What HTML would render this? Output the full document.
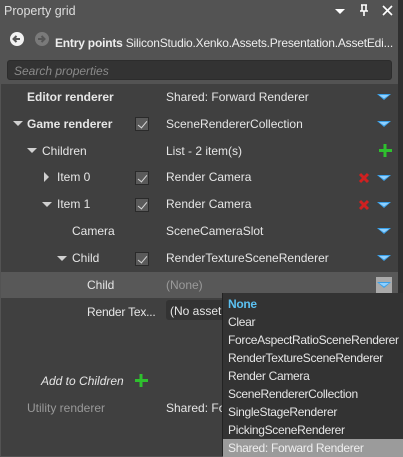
<!DOCTYPE html>
<html><head><meta charset="utf-8"><style>
*{margin:0;padding:0;box-sizing:border-box}
body{width:403px;height:456px;overflow:hidden;background:#535353;font-family:"Liberation Sans",sans-serif;font-size:12px;color:#e6e6e6;position:relative}
.a{position:absolute;white-space:nowrap}
.b{font-weight:bold}
.cb{position:absolute;width:14px;height:14px;border:1px solid #2a2a2a;background:#5a5a5a}
.cb:after{content:"";position:absolute;left:4px;top:1px;width:4px;height:8px;border:solid #d8d8d8;border-width:0 1.5px 1.5px 0;transform:rotate(40deg)}
.tri{position:absolute;width:0;height:0;border-left:5px solid transparent;border-right:5px solid transparent;border-top:5px solid #d0d0d0}
.tr{position:absolute;width:0;height:0;border-top:5px solid transparent;border-bottom:5px solid transparent;border-left:5px solid #d0d0d0}
.dl div{height:18px;line-height:18px;padding-left:5px}
</style></head><body>
<div class="a" style="left:4px;top:4px;font-size:12.5px;color:#ddd">Property grid</div>
<div class="tri" style="left:335px;top:9px;border-top-color:#fff"></div>
<svg class="a" style="left:358px;top:4px" width="12" height="13"><path d="M3 1h6M4 1v6M8 1v6M2 7h8M6 7v5" stroke="#fff" stroke-width="1.6" fill="none"/></svg>
<svg class="a" style="left:382px;top:5px" width="11" height="11"><path d="M1 1L10 10M10 1L1 10" stroke="#fff" stroke-width="1.6"/></svg>
<div style="position:absolute;left:398px;top:0;width:5px;height:456px;background:#2f2f2f"></div>
<svg class="a" style="left:9px;top:31px" width="40" height="16"><circle cx="8" cy="8" r="7" fill="#f2f2f2"/><path d="M11 8H5M7.5 5L4.5 8L7.5 11" stroke="#555" stroke-width="2" fill="none"/><circle cx="33" cy="8" r="7" fill="#7a7a7a"/><path d="M29 8h6M32.5 5l3 3-3 3" stroke="#555" stroke-width="2" fill="none"/></svg>
<div class="a" style="left:55px;top:36px;font-size:12px;letter-spacing:-0.2px;color:#eee"><b>Entry points</b> SiliconStudio.Xenko.Assets.Presentation.AssetEdi...</div>
<div style="position:absolute;left:7px;top:60px;width:385px;height:20px;background:#333;border-radius:3px;border:1px solid #2c2c2c"></div>
<div class="a" style="left:14px;top:64px;font-style:italic;color:#8a8a8a">Search properties</div>
<div style="position:absolute;left:1px;top:84px;width:397px;height:372px;background:#404040"></div>
<div style="position:absolute;left:1px;top:272px;width:397px;height:26px;background:#585858"></div>

<div class="a b" style="left:27px;top:90px">Editor renderer</div><div class="a" style="left:166px;top:90px">Shared: Forward Renderer</div>
<div class="tri" style="left:13px;top:121px"></div><div class="a b" style="left:27px;top:117px">Game renderer</div><div class="cb" style="left:135px;top:117px"></div><div class="a" style="left:166px;top:117px">SceneRendererCollection</div>
<div class="tri" style="left:27px;top:148px"></div><div class="a" style="left:42px;top:144px">Children</div><div class="a" style="left:166px;top:144px">List - 2 item(s)</div>
<div class="tr" style="left:44px;top:172px"></div><div class="a" style="left:57px;top:170px">Item 0</div><div class="cb" style="left:135px;top:171px"></div><div class="a" style="left:166px;top:170px">Render Camera</div>
<div class="tri" style="left:42px;top:202px"></div><div class="a" style="left:57px;top:197px">Item 1</div><div class="cb" style="left:135px;top:198px"></div><div class="a" style="left:166px;top:197px">Render Camera</div>
<div class="a" style="left:72px;top:224px">Camera</div><div class="a" style="left:166px;top:224px">SceneCameraSlot</div>
<div class="tri" style="left:57px;top:256px"></div><div class="a" style="left:72px;top:251px">Child</div><div class="cb" style="left:135px;top:252px"></div><div class="a" style="left:166px;top:251px">RenderTextureSceneRenderer</div>
<div class="a" style="left:87px;top:278px">Child</div><div class="a" style="left:166px;top:278px;color:#9a9a9a">(None)</div>
<div style="position:absolute;left:376px;top:277px;width:16px;height:16px;background:#aaa"></div>
<div class="a" style="left:87px;top:305px;letter-spacing:-0.2px">Render Tex...</div>
<div style="position:absolute;left:166px;top:300px;width:70px;height:20px;background:#333;border-radius:3px"></div><div class="a" style="left:170px;top:304px">(No asset</div>
<div class="a" style="left:41px;top:374px;font-style:italic">Add to Children</div>
<div class="a" style="left:27px;top:401px;color:#999">Utility renderer</div><div class="a" style="left:166px;top:401px">Shared: Fo</div>

<svg class="a" style="left:0;top:0" width="403" height="456">
<defs><g id="d"><path d="M0 0h14l-7 6z" fill="#3aa0e8"/><path d="M2 1h10l-5 3.5z" fill="#8fd0ff"/></g>
<g id="x"><path d="M1 1L9 9M9 1L1 9" stroke="#d02020" stroke-width="3"/></g>
<g id="p"><path d="M6 0v13M0 6.5h13" stroke="#2ec02e" stroke-width="3"/></g></defs>
<use href="#d" x="377" y="94"/><use href="#d" x="377" y="121"/><use href="#d" x="377" y="175"/><use href="#d" x="377" y="202"/><use href="#d" x="377" y="228"/><use href="#d" x="377" y="255"/><use href="#d" x="377" y="282"/>
<use href="#x" x="359" y="173"/><use href="#x" x="359" y="200"/>
<use href="#p" x="379" y="144"/><use href="#p" x="135" y="374"/>
</svg>

<div class="dl" style="position:absolute;left:222px;top:293px;width:181px;height:163px;background:#333;font-size:12px;letter-spacing:-0.3px;border-left:1px solid #222;padding-top:2px">
<div style="color:#5bc0f0;font-weight:bold">None</div><div>Clear</div><div>ForceAspectRatioSceneRenderer</div><div>RenderTextureSceneRenderer</div><div>Render Camera</div><div>SceneRendererCollection</div><div>SingleStageRenderer</div><div>PickingSceneRenderer</div><div style="background:#9b9b9b;color:#eee">Shared: Forward Renderer</div>
</div>
</body></html>
